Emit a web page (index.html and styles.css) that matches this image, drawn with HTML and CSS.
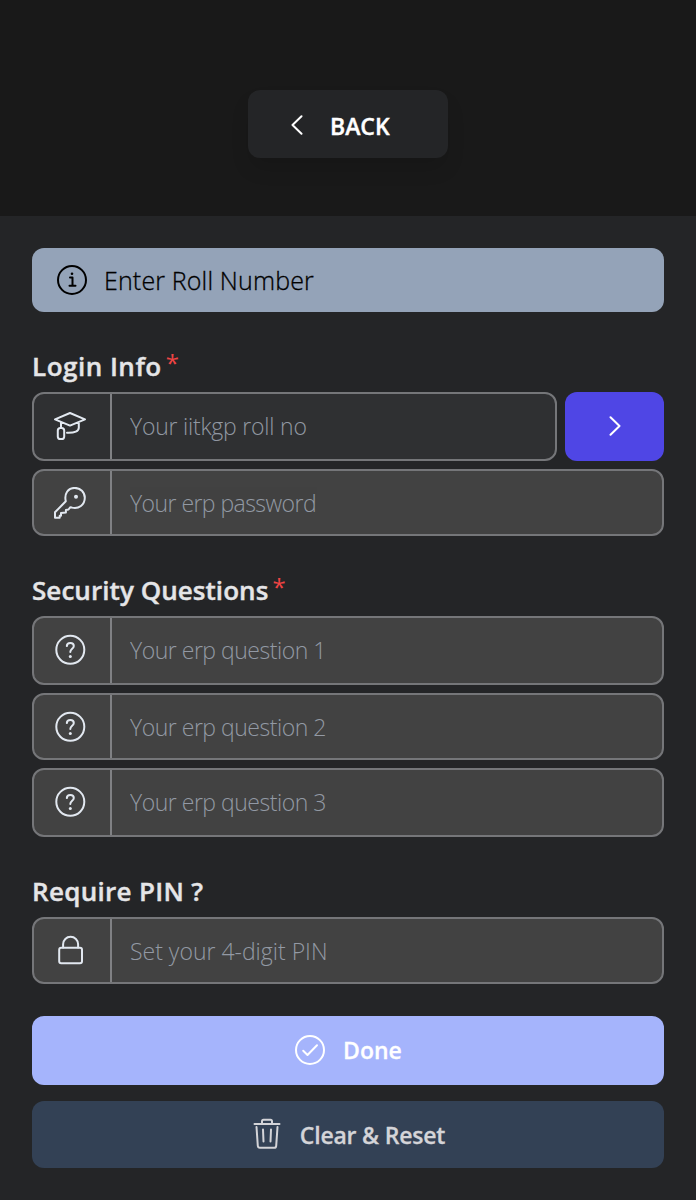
FILE: index.html
```html
<!DOCTYPE html>
<html lang="en">
<head>
<meta charset="utf-8">
<title>ERP Login Setup</title>
<link rel="stylesheet" href="styles.css">
</head>
<body>
<svg class="sprite" aria-hidden="true">
  <symbol id="question" viewBox="0 0 32 32">
    <circle cx="16.300" cy="15.800" r="14"/>
    <path d="M12.800 12.100c.1-2 1.500-3.200 3.500-3.200s3.500 1.200 3.500 3c0 2.900-3.500 2.800-3.500 6.200"/>
    <circle class="dot" cx="16.300" cy="22.400" r="1.500"/>
  </symbol>
</svg>
<header class="top">
  <button class="back">
    <svg class="back-icon" viewBox="0 0 12 20"><path d="M10.500 1.200 1.500 10l9 8.800"/></svg>
    <span class="back-label">BACK</span>
  </button>
</header>
<main class="form">
  <div class="alert">
    <svg class="icon" viewBox="0 0 32 32"><circle cx="16" cy="16" r="14"/><path d="M14 13.500h2.500v8M13.500 21.800h6"/><circle class="dot" cx="16" cy="9.700" r="1.300"/></svg>
    <span class="alert-text">Enter Roll Number</span>
  </div>

  <section class="group">
    <h2 class="title"><span class="t-login">Login Info</span><span class="star">*</span></h2>
    <div class="row">
      <label class="field tall active">
        <span class="cell"><svg class="icon" viewBox="0 0 32 32"><path d="M1 9.300 16 3l15 6.300L16 15.600zM7 12v6M24.800 12.200v5.500c0 3.500-4 5.300-11.800 5"/><rect x="3.800" y="18" width="6.400" height="11" rx="2.600"/></svg></span>
        <input class="input p-roll" type="text" placeholder="Your iitkgp roll no">
      </label>
      <button class="next"><svg class="next-icon" viewBox="0 0 12 20"><path d="M1.500 1.200 10.500 10l-9 8.800"/></svg></button>
    </div>
    <label class="field">
      <span class="cell"><svg class="icon" viewBox="0 0 32 32"><path d="M11.800 14.200C10 6.900 14 .9 20.800 .9c5.700 0 10 4.300 10 9.900 0 7-6 11.600-13 9.800l-1.600-.3-1.700 2.200-2.600.4v2.600l-4.900.6v2.600H5.700v2.100H1v-5.500z"/><circle class="dot" cx="22" cy="9.700" r="2"/></svg></span>
      <input class="input p-pass" type="password" placeholder="Your erp password">
    </label>
  </section>

  <section class="group">
    <h2 class="title"><span class="t-security">Security Questions</span><span class="star">*</span></h2>
    <label class="field tall">
      <span class="cell"><svg class="icon"><use href="#question"/></svg></span>
      <input class="input p-q" type="text" placeholder="Your erp question 1">
    </label>
    <label class="field">
      <span class="cell"><svg class="icon"><use href="#question"/></svg></span>
      <input class="input p-q" type="text" placeholder="Your erp question 2">
    </label>
    <label class="field tall">
      <span class="cell"><svg class="icon"><use href="#question"/></svg></span>
      <input class="input p-q" type="text" placeholder="Your erp question 3">
    </label>
  </section>

  <section class="group">
    <h2 class="title"><span class="t-pin">Require PIN ?</span></h2>
    <label class="field">
      <span class="cell"><svg class="icon" viewBox="0 0 32 32"><rect x="5.200" y="12.800" width="22.800" height="15.400" rx="2"/><path d="M9.100 12.500V9.300a7.500 7.500 0 0 1 15 0v3.200"/></svg></span>
      <input class="input" type="text" placeholder="Set your 4-digit PIN">
    </label>
  </section>

  <div class="actions">
    <button class="action done"><svg class="icon" viewBox="0 0 32 32"><circle cx="16" cy="16" r="14"/><path d="m9.200 16.700 4.300 4.300 9.500-9.800"/></svg><span class="l-done">Done</span></button>
    <button class="action reset"><svg class="icon" viewBox="0 0 32 32"><path d="M3.500 6h25M11 5.500V3.300A1.500 1.500 0 0 1 12.500 1.800h7A1.500 1.500 0 0 1 21 3.300v2.200M5.500 9l1.300 18.800c.1 1.300.9 2 2 2h14.400c1.100 0 1.900-.7 2-2L26.500 9M12 11.500l.5 12M20 11.500l-.5 12"/></svg><span class="l-reset">Clear &amp; Reset</span></button>
  </div>
</main>
</body>
</html>
```
FILE: styles.css
```css
* { box-sizing: border-box; }
body {
  margin: 0;
  min-height: 1200px;
  background: #242527;
  color: #e5e5e7;
  font-family: "Open Sans", "Noto Sans", sans-serif;
}
button { border: 0; font: inherit; color: inherit; padding: 0; }
svg { fill: none; stroke: currentColor; stroke-width: 2; stroke-linecap: round; stroke-linejoin: round; }
.sprite { display: none; }
.dot { fill: currentColor; stroke: none; }
.icon { width: 32px; height: 32px; flex: none; display: block; }

.top { height: 216px; padding-top: 90px; background: #191919; display: flex; justify-content: center; align-items: flex-start; }
.back { width: 200px; height: 68px; border-radius: 12px; background: #242527; color: #fff; display: flex; align-items: center; padding: 2px 0 0 43px; box-shadow: 0 12px 20px -2px rgba(0, 0, 0, .12); }
.back-icon { width: 12px; height: 20px; }
.back-label { font-size: 23px; font-weight: 600; -webkit-text-stroke: .4px; margin-left: 27px; padding-top: 2px; }

.form { padding: 32px; }
.alert { height: 64px; border-radius: 12px; background: #94a3b8; color: #000; display: flex; align-items: center; padding-left: 24px; gap: 16px; }
.alert-text { font-size: 25px; font-weight: 300; -webkit-text-stroke: .3px; letter-spacing: .15px; }

.group { display: flex; flex-direction: column; gap: 8px; margin-top: 32px; }
.title { margin: 0 0 -8px; height: 48px; line-height: 44px; font-size: 26px; font-weight: 600; -webkit-text-stroke: .4px; display: flex; white-space: nowrap; }
.t-login { letter-spacing: .5px; }
.t-security { letter-spacing: .06px; }
.t-pin { letter-spacing: .3px; }
.star { color: #ef4444; font-size: 24px; font-weight: 400; line-height: 38px; margin-left: 4px; -webkit-text-stroke: 0; }
.row { display: flex; gap: 8px; }
.field { height: 67px; border: 2px solid #757679; border-radius: 12px; background: #424242; display: flex; overflow: hidden; }
.tall { height: 69px; }
.active { flex: 1; background: #2f3032; }
.cell { width: 78px; border-right: 2px solid #808184; display: flex; align-items: center; padding-left: 20px; color: #e2e8f0; flex: none; }
.tall .cell { padding-bottom: 2px; }
.input { flex: 1; min-width: 0; border: 0; outline: 0; background: transparent; padding: 1px 18px 0; font: 300 23px "Open Sans", "Noto Sans", sans-serif; color: #e5e5e7; }
.tall .input { padding-bottom: 2px; }
.input::placeholder { color: #9ca3af; opacity: .9; }
.p-roll { letter-spacing: -.22px; }
.p-pass { letter-spacing: -.55px; }
.p-q { letter-spacing: -.48px; }
.next { width: 99px; height: 69px; border-radius: 12px; background: #4f46e5; color: #fff; display: flex; align-items: center; justify-content: center; padding-bottom: 2px; }
.next-icon { width: 12px; height: 20px; }

.actions { margin-top: 32px; display: flex; flex-direction: column; gap: 16px; }
.action { border-radius: 12px; display: flex; align-items: center; justify-content: center; gap: 17px; font-size: 23px; font-weight: 600; }
.done { height: 69px; padding-bottom: 2px; background: #a5b4fc; color: #fff; }
.l-done, .l-reset { -webkit-text-stroke: .3px; }
.reset { height: 67px; padding-bottom: 1px; background: #334155; color: #d4d4d8; }
.l-reset { letter-spacing: -.2px; padding-top: 1px; }
```
